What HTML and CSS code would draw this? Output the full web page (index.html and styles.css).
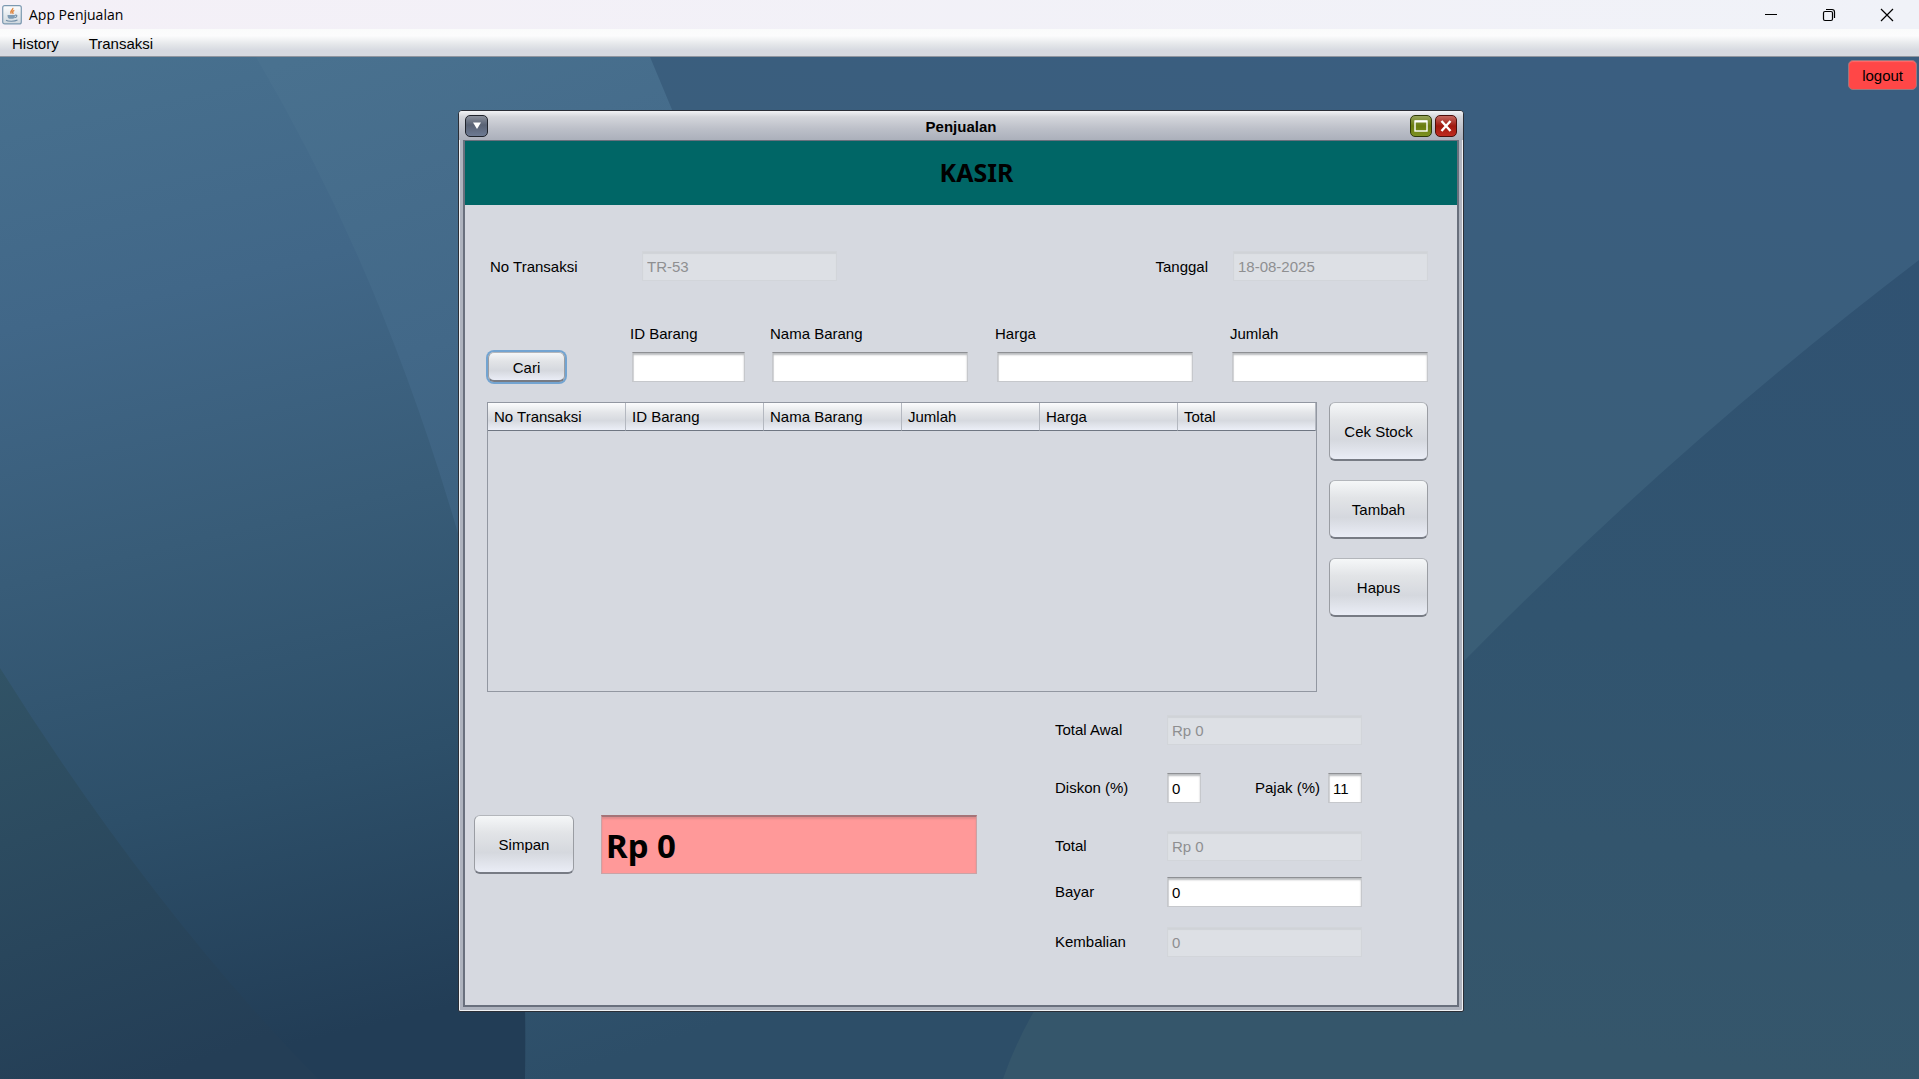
FILE: index.html
```html
<!DOCTYPE html>
<html lang="id">
<head>
<meta charset="utf-8">
<meta name="viewport" content="width=device-width, initial-scale=1">
<title>App Penjualan</title>
<link rel="stylesheet" href="styles.css">
</head>
<body>
<header class="titlebar">
  <svg class="app-icon" viewBox="0 0 20 20" width="20" height="20" aria-hidden="true">
    <defs><linearGradient id="tile" x1="0" y1="0" x2="0" y2="1"><stop offset="0" stop-color="#fdfdfe"/><stop offset="1" stop-color="#cdd6dd"/></linearGradient></defs>
    <rect x=".7" y=".7" width="18.6" height="18.2" rx="2" fill="url(#tile)" stroke="#7c99b1" stroke-width="1.2"/>
    <path d="M10.6 3c1.5 1.500-3.400 2.800-1.300 5.600M12.300 5.400c-2.300.9-1.900 1.900-1 3.400" fill="none" stroke="#e0843c" stroke-width="1.400"/>
    <path d="M5.500 10h7.500c0 2-.8 3.400-1.800 3.800h-4C6 13.200 5.500 12 5.500 10z" fill="#7f9bb3"/>
    <path d="M13 10.300c2.600-.7 2.600 1.700-.6 2.500M4 15.300c2 1.300 8.600 1.300 11.500-.2" fill="none" stroke="#6f8ca6" stroke-width="1.100"/>
  </svg>
  <span class="app-name">App Penjualan</span>
  <div class="caption-buttons">
    <button type="button" aria-label="Minimize"><svg width="14" height="14" viewBox="0 0 14 14"><path d="M1 6.500h12" stroke="#000"/></svg></button>
    <button type="button" aria-label="Restore"><svg width="14" height="14" viewBox="0 0 14 14" fill="none" stroke="#000" stroke-width="1.200"><rect x="1.500" y="3.500" width="9" height="9" rx="1.500"/><path d="M4 1.500h6a2.500 2.500 0 0 1 2.500 2.500v6"/></svg></button>
    <button type="button" aria-label="Close"><svg width="14" height="14" viewBox="0 0 14 14"><path d="M1 1l12 12M13 1L1 13" stroke="#000" stroke-width="1.200"/></svg></button>
  </div>
</header>
<nav class="menubar">
  <button type="button">History</button>
  <button type="button">Transaksi</button>
</nav>

<main class="desktop">
  <svg class="backdrop" viewBox="0 0 1919 1022" preserveAspectRatio="none" aria-hidden="true">
    <defs>
      <linearGradient id="gLeft" gradientUnits="userSpaceOnUse" x1="0" y1="0" x2="240" y2="1000">
        <stop offset="0" stop-color="#48718f"/><stop offset=".26" stop-color="#416788"/><stop offset=".5" stop-color="#385c78"/><stop offset=".75" stop-color="#2d4f69"/><stop offset="1" stop-color="#223d56"/>
      </linearGradient>
      <linearGradient id="gMid" gradientUnits="userSpaceOnUse" x1="300" y1="0" x2="620" y2="1000">
        <stop offset="0" stop-color="#49718f"/><stop offset=".3" stop-color="#426888"/><stop offset="1" stop-color="#2d4e68"/>
      </linearGradient>
      <linearGradient id="gTop" gradientUnits="userSpaceOnUse" x1="1500" y1="0" x2="1400" y2="600">
        <stop offset="0" stop-color="#3a5e80"/><stop offset="1" stop-color="#3a5e76"/>
      </linearGradient>
      <linearGradient id="gRight" gradientUnits="userSpaceOnUse" x1="1919" y1="200" x2="1800" y2="1022">
        <stop offset="0" stop-color="#305272"/><stop offset=".5" stop-color="#31546f"/><stop offset="1" stop-color="#35566b"/>
      </linearGradient>
      <linearGradient id="gCorner" gradientUnits="userSpaceOnUse" x1="0" y1="611" x2="150" y2="1022">
        <stop offset="0" stop-color="#315366"/><stop offset="1" stop-color="#243e56"/>
      </linearGradient>
    </defs>
    <rect width="1919" height="1022" fill="url(#gTop)"/>
    <path d="M250 0H650C760 260 900 640 1100 1022H500z" fill="url(#gMid)"/>
    <path d="M0 0H256Q380 210 457 473Q530 720 525 1022H0z" fill="url(#gLeft)"/>
    <path d="M0 611Q150 850 318 1022H0z" fill="url(#gCorner)"/>
    <path d="M1919 203Q1680 385 1465 603Q1080 800 1003 1022H1919z" fill="url(#gRight)"/>
  </svg>

  <div class="session"><button type="button" class="logout">logout</button></div>

  <section class="frame" aria-labelledby="frame-title">
    <div class="frame-bar">
      <button type="button" class="frame-btn frame-menu" aria-label="Menu"><svg width="10" height="8" viewBox="0 0 10 8"><path d="M1 0.500h8L5 7z" fill="#fff"/></svg></button>
      <h2 id="frame-title">Penjualan</h2>
      <button type="button" class="frame-btn frame-max" aria-label="Maximize"><svg width="14" height="12" viewBox="0 0 14 12"><rect x="1" y="1" width="12" height="10" fill="none" stroke="#fff" stroke-width="1.400"/><path d="M1 1.500h12" stroke="#fff" stroke-width="2"/></svg></button>
      <button type="button" class="frame-btn frame-close" aria-label="Close"><svg width="12" height="12" viewBox="0 0 12 12"><path d="M1.500 1l9 10M10.500 1l-9 10" stroke="#fff" stroke-width="2.400"/></svg></button>
    </div>
    <form class="frame-body">
      <h1 class="banner">KASIR</h1>

      <div class="form-main">
        <div class="row-info">
          <label for="no">No Transaksi</label>
          <input id="no" type="text" value="TR-53" disabled>
          <label for="tgl" class="date-label">Tanggal</label>
          <input id="tgl" type="text" value="18-08-2025" disabled>
        </div>

        <div class="row-item">
          <button type="button" class="btn btn-small btn-focus">Cari</button>
          <div class="stack"><label for="idb">ID Barang</label><input id="idb" class="w-id" type="text"></div>
          <div class="stack"><label for="nama">Nama Barang</label><input id="nama" type="text"></div>
          <div class="stack"><label for="harga">Harga</label><input id="harga" type="text"></div>
          <div class="stack"><label for="jumlah">Jumlah</label><input id="jumlah" type="text"></div>
        </div>

        <div class="row-table">
          <div class="table-pane">
            <table>
              <thead>
                <tr><th scope="col">No Transaksi</th><th scope="col">ID Barang</th><th scope="col">Nama Barang</th><th scope="col">Jumlah</th><th scope="col">Harga</th><th scope="col">Total</th></tr>
              </thead>
              <tbody></tbody>
            </table>
          </div>
          <div class="actions">
            <button type="button" class="btn">Cek Stock</button>
            <button type="button" class="btn">Tambah</button>
            <button type="button" class="btn">Hapus</button>
          </div>
        </div>
      </div>

      <div class="form-foot">
        <div class="pay">
          <button type="button" class="btn btn-save">Simpan</button>
          <input class="grand-total" type="text" value="Rp 0" aria-label="Total bayar">
        </div>
        <div class="summary">
          <div class="line"><label for="awal">Total Awal</label><input id="awal" type="text" value="Rp 0" disabled></div>
          <div class="line line-wide">
            <label for="diskon">Diskon (%)</label><input id="diskon" class="w-num" type="text" value="0">
            <label for="pajak" class="tax-label">Pajak (%)</label><input id="pajak" class="w-num" type="text" value="11">
          </div>
          <div class="line line-wide"><label for="total">Total</label><input id="total" type="text" value="Rp 0" disabled></div>
          <div class="line"><label for="bayar">Bayar</label><input id="bayar" type="text" value="0"></div>
          <div class="line line-change"><label for="kembali">Kembalian</label><input id="kembali" type="text" value="0" disabled></div>
        </div>
      </div>
    </form>
  </section>
</main>
</body>
</html>
```
FILE: styles.css
```css
*, *::before, *::after { box-sizing: border-box; }

html, body { height: 100%; }

body {
  margin: 0;
  display: flex;
  flex-direction: column;
  font: 15px/20px "Liberation Sans", Arial, sans-serif;
  color: #000;
  background: #3a5e7a;
}

button, input { font: inherit; color: inherit; }
button { padding: 0; border: 0; background: none; }

/* application title bar */
.titlebar {
  display: flex;
  align-items: center;
  height: 29px;
  padding-left: 2px;
  background: linear-gradient(90deg, #f4f0f7, #f0f2f8);
}
.app-name {
  margin-left: 7px;
  font: 14px/20px "Open Sans", "Noto Sans", sans-serif;
}
.caption-buttons { display: flex; margin: 0 3px 0 auto; }
.caption-buttons button {
  display: grid;
  place-items: center;
  width: 58px;
  height: 29px;
}

.menubar {
  display: flex;
  gap: 30px;
  height: 28px;
  padding: 0 12px;
  border-bottom: 1px solid #8f959f;
  background: linear-gradient(#fafbfb, #fcfcfd 25%, #e6e8eb 55%, #d6d9e0 80%, #d6d9e0);
}
.menubar button { padding-top: 3px; }

/* desktop */
.desktop {
  position: relative;
  flex: 1;
  padding: 0 0 16px 3px;
}
.backdrop {
  position: absolute;
  inset: 0;
  width: 100%;
  height: 100%;
}
.session {
  position: relative;
  display: flex;
  justify-content: flex-end;
  padding: 3px 2px 0;
}
.logout {
  height: 30px;
  padding: 1px 13px 0;
  border: 1px solid #98787f;
  border-radius: 5px;
  background: #ff4747;
  box-shadow: inset 0 1px 1px #ff6a6a;
}

/* internal frame */
.frame {
  position: relative;
  width: 1006px;
  max-width: 100%;
  margin: 20px auto 0;
  padding: 0 4px 4px;
  border: 1px solid #2a2e36;
  border-radius: 4px 4px 2px 2px;
  background: #aeb3be;
  box-shadow: inset 1px 1px 0 #f0f1f4, inset -1px -1px 0 #f0f1f4;
}
.frame-bar {
  display: flex;
  align-items: center;
  gap: 3px;
  height: 29px;
  margin: 0 -4px;
  padding: 0 6px;
  border-radius: 3px 3px 0 0;
  background: linear-gradient(#f2f3f5, #d4d6db 20%, #bdc0c9 60%, #abb0bb);
}
.frame-bar h2 {
  flex: 1;
  margin: 0;
  padding: 2px 0 0 24px;
  font-size: 15px;
  line-height: 20px;
  text-align: center;
}
.frame-btn {
  display: grid;
  place-items: center;
  width: 22px;
  height: 22px;
  border: 1px solid #20242c;
  border-radius: 5px;
}
.frame-menu { width: 23px; background: linear-gradient(#8a909c, #596274 45%, #6d7a93); }
.frame-max { border-color: #2f3a08; background: linear-gradient(#95a35b, #697c0e 50%, #7d9121); }
.frame-close { border-color: #4c0e0a; background: linear-gradient(#c4675f, #a0180e 50%, #bf2a1f); }

.frame-body {
  border: 2px solid #69707d;
  border-top-width: 1px;
  background: #d6d9e0;
}
.banner {
  margin: 0;
  padding: 15px 0 17px 31px;
  background: #006666;
  font: bold 25px/32px "Noto Sans", Verdana, sans-serif;
  text-align: center;
}

.form-main { padding: 46px 29px 0 22px; }

input {
  width: 197px;
  height: 30px;
  padding: 0 4px;
  border: 1px solid #c6c8cc;
  border-top-color: #8e9094;
  border-radius: 0;
  background: #fff;
  box-shadow: inset 0 2px 2px #b9bbbe, inset 1px 0 0 #dcdee0;
}
input:disabled {
  border-color: #d2d5da;
  background: #dde0e5;
  color: #8e8f91;
  box-shadow: inset 0 2px 1px #d0d3d7;
}

.row-info { display: flex; align-items: center; }
.row-info label { padding-top: 2px; }
.row-info input { width: 195px; }
.row-info label:first-child { width: 155px; padding-left: 3px; }
.row-info .date-label { margin-left: auto; padding-right: 25px; }

.row-item {
  display: grid;
  grid-template-columns: 143px 140px 225px 235px 1fr;
  align-items: end;
  margin-top: 43px;
}
.stack { display: flex; flex-direction: column; gap: 8px; }
.stack input { width: 196px; margin-left: 2px; }
.stack .w-id { width: 113px; }

.btn {
  width: 99px;
  height: 59px;
  padding-top: 1px;
  border: 1px solid #9a9da3;
  border-top-color: #b3b6bb;
  border-bottom: 2px solid #777b84;
  border-radius: 6px;
  background: linear-gradient(#f5f7f8, #e2e4e7 30%, #d5d8de 65%, #eaedf6);
}
.btn-small { width: 77px; height: 30px; margin-left: 1px; padding-top: 3px; }
.btn-focus { box-shadow: 0 0 0 2px #73a4d1; }

.row-table { display: flex; gap: 12px; margin-top: 20px; }
.table-pane {
  flex: 1;
  height: 290px;
  border: 1px solid #9297a1;
}
table { width: 100%; border-collapse: separate; border-spacing: 0; table-layout: fixed; }
th {
  height: 28px;
  padding: 0 6px;
  border-right: 1px solid #b4b8c0;
  border-bottom: 1px solid #6f7682;
  background: linear-gradient(#fbfcfd, #e4e6e9 35%, #d6d9df 65%, #eceff7);
  font-weight: normal;
  text-align: left;
}
.actions { display: flex; flex-direction: column; gap: 19px; }

.form-foot {
  display: flex;
  gap: 78px;
  padding: 23px 29px 48px 9px;
}
.pay { display: flex; gap: 27px; padding-top: 100px; }
.btn-save { width: 100px; }
.grand-total {
  width: 376px;
  height: 59px;
  border-color: #c9a3a6;
  border-top: 2px solid #a47478;
  background: #ff9999;
  box-shadow: inset 0 2px 2px #e08c8d;
  font: bold 33px/40px "Noto Sans", Verdana, sans-serif;
}

.summary { display: flex; flex-direction: column; gap: 16px; }
.line { display: flex; align-items: center; }
.line label:first-child { width: 112px; }
.line input { width: 195px; }
.line .w-num { width: 34px; }
.line-wide { padding-top: 12px; }
.line-change { padding-top: 4px; }
.tax-label { margin-left: auto; padding-right: 8px; }
```
